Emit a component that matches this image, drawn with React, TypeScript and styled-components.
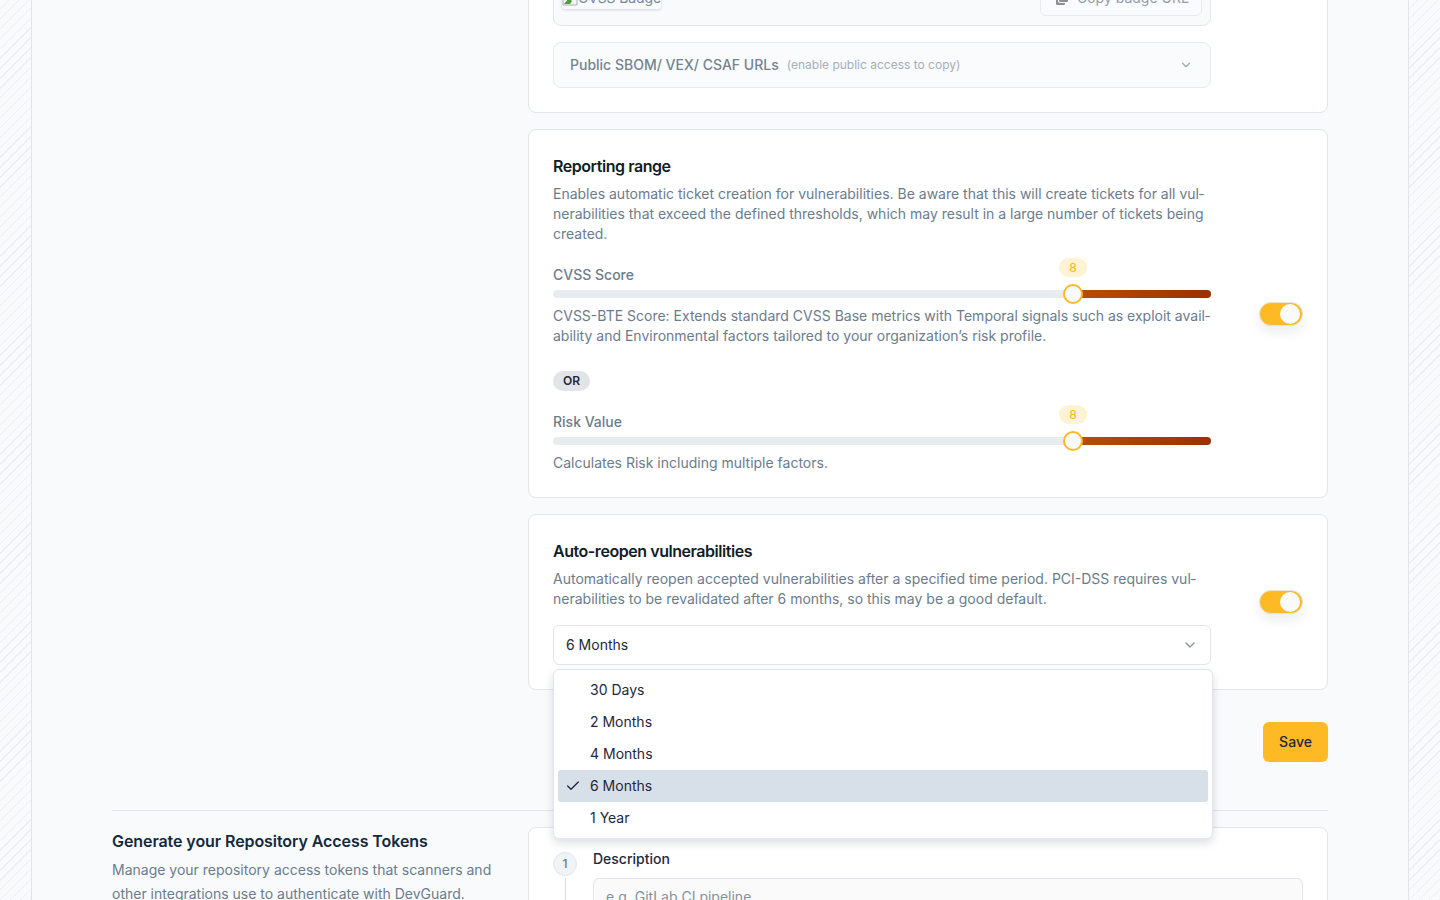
import { Check, ChevronDown } from 'lucide-react';
import { HiDocumentDuplicate } from 'react-icons/hi2';
import styled, { createGlobalStyle } from 'styled-components';

const GlobalStyle = createGlobalStyle`
  html, body {
    margin: 0;
    height: 100%;
    overflow: hidden;
    background: #f8fafc;
    font-family: Inter, "Liberation Sans", sans-serif;
    font-size: 14px;
    line-height: 20px;
    color: #0f172a;
  }
  * { box-sizing: border-box; }
`;

const Page = styled.div`
  display: flex;
  height: 900px;
  overflow: hidden;
`;

const Hatch = styled.div`
  flex: 0 0 31px;
  background-color: #f8fafc;
  background-image: repeating-linear-gradient(
    135deg,
    transparent 0 6px,
    #eceef2 6px 7px
  );
`;

const Main = styled.main`
  flex: 1;
  min-width: 0;
  border-left: 1px solid #e2e5ea;
  border-right: 1px solid #e2e5ea;
  padding: 0 80px;
  margin-top: -55px;
`;

const Row = styled.section`
  display: grid;
  grid-template-columns: 392px 800px;
  column-gap: 24px;
  align-items: start;
`;

const Stack = styled.div`
  grid-column: 2;
  display: flex;
  flex-direction: column;
  gap: 16px;
`;

const Card = styled.div`
  display: flex;
  gap: 48px;
  align-items: center;
  background: #fff;
  border: 1px solid #e2e5ea;
  border-radius: 8px;
  padding: 24px;
`;

const CardBody = styled.div`
  flex: 0 0 658px;
  width: 658px;
`;

const BadgeBox = styled.div`
  display: flex;
  align-items: center;
  justify-content: space-between;
  height: 56px;
  padding: 0 8px;
  background: #f8fafc;
  border: 1px solid #e2e5ea;
  border-radius: 8px;
  margin-bottom: 16px;
`;

const BadgeImage = styled.span`
  display: flex;
  align-items: center;
  height: 22px;
  color: #7d8996;
  font-size: 14px;
  letter-spacing: -0.1px;
  border-radius: 3px;
  box-shadow: 0 1px 3px rgba(15, 23, 42, 0.16);
`;

const CopyButton = styled.span`
  display: flex;
  align-items: center;
  gap: 7px;
  width: 162px;
  height: 36px;
  padding: 0 13px;
  color: #949ea9;
  font-size: 14px;
  white-space: nowrap;
  background: #fafbfc;
  border: 1px solid #e8eaee;
  border-radius: 6px;

  svg {
    color: #8b9097;
    flex: 0 0 16px;
  }
`;

const Accordion = styled.div`
  display: flex;
  align-items: center;
  height: 46px;
  padding: 0 17px 0 16px;
  background: #fafbfc;
  border: 1px solid #e8eaee;
  border-radius: 8px;
  color: #9aa3ae;
`;

const AccordionTitle = styled.span`
  font-weight: 500;
  color: #75838f;
`;

const AccordionHint = styled.span`
  margin-left: 8px;
  flex: 1;
  font-size: 12px;
  color: #a6aeb8;
`;

const Title = styled.h3`
  margin: 0 0 6px;
  font-size: 16px;
  line-height: 24px;
  font-weight: 600;
  letter-spacing: -0.45px;
  color: #111c27;
`;

const Muted = styled.p`
  margin: 0;
  color: #6b7c8c;
`;

const SliderLabel = styled.div<{ $top: number }>`
  margin-top: ${({ $top }) => $top}px;
  font-weight: 500;
  color: #6b7c8c;
`;

const SliderTrack = styled.div`
  position: relative;
  height: 8px;
  margin: 5px 0 8px;
  border-radius: 4px;
  background: #e8ebef;
`;

const SliderRange = styled.div`
  position: absolute;
  top: 0;
  bottom: 0;
  left: 520px;
  right: 0;
  border-radius: 0 4px 4px 0;
  background: linear-gradient(90deg, #b84f05, #9a3100);
`;

const SliderThumb = styled.div`
  position: absolute;
  top: -6px;
  left: 510px;
  width: 20px;
  height: 20px;
  border-radius: 50%;
  background: #f8fafc;
  border: 2px solid #fdba24;
`;

const SliderValue = styled.div`
  position: absolute;
  top: -32px;
  left: 506px;
  width: 28px;
  height: 19px;
  border-radius: 10px;
  background: #fff3d4;
  color: #fdba24;
  font-size: 12px;
  line-height: 19px;
  font-weight: 500;
  text-align: center;
`;

const OrPill = styled.span`
  display: inline-block;
  margin-top: 25px;
  padding: 0 10px;
  height: 20px;
  border-radius: 10px;
  background: #e2e4e7;
  color: #1e293b;
  font-size: 12px;
  line-height: 20px;
  font-weight: 600;
  vertical-align: top;
`;

const Toggle = styled.div`
  flex: 0 0 44px;
  display: flex;
  justify-content: flex-end;
  align-items: center;
  height: 24px;
  padding: 2px;
  border-radius: 12px;
  background: #fdba24;
  border: 1px solid #e9e3d2;
  box-shadow: 0 6px 12px rgba(15, 23, 42, 0.08);
`;

const ToggleKnob = styled.div`
  width: 20px;
  height: 20px;
  border-radius: 50%;
  background: #f8fafc;
`;

const SelectWrap = styled.div`
  position: relative;
  margin-top: 16px;
`;

const SelectButton = styled.div`
  display: flex;
  align-items: center;
  justify-content: space-between;
  height: 40px;
  padding: 0 12px;
  border: 1px solid #e2e5ea;
  border-radius: 6px;
  background: #fff;
  color: #1e293b;
`;

const Menu = styled.div`
  position: absolute;
  top: 44px;
  left: 0;
  width: 660px;
  padding: 4px;
  background: #fff;
  border: 1px solid #e2e5ea;
  border-radius: 6px;
  box-shadow: 0 4px 10px rgba(15, 23, 42, 0.14);
  z-index: 5;
`;

const MenuItem = styled.div<{ $selected?: boolean }>`
  position: relative;
  height: 32px;
  padding-left: 32px;
  line-height: 32px;
  border-radius: 3px;
  color: #1e293b;
  background: ${({ $selected }) => ($selected ? '#d7dfe9' : 'transparent')};
`;

const MenuCheck = styled.span`
  position: absolute;
  left: 7px;
  top: 8px;
  display: flex;
`;

const Actions = styled.div`
  display: flex;
  justify-content: flex-end;
  margin-top: 16px;
`;

const SaveButton = styled.button`
  width: 65px;
  height: 40px;
  border: 0;
  border-radius: 6px;
  background: #fdba24;
  color: #1e293b;
  font: 500 14px/20px Inter, "Liberation Sans", sans-serif;
`;

const TokenRow = styled(Row)`
  margin-top: 48px;
  padding-top: 16px;
  border-top: 1px solid #e2e5ea;
`;

const TokenIntro = styled.div`
  padding-top: 1px;
`;

const TokenTitle = styled.h2`
  margin: 0 0 4px;
  font-size: 16px;
  line-height: 26px;
  font-weight: 600;
  letter-spacing: -0.08px;
  color: #14293d;
`;

const TokenText = styled.p`
  margin: 0;
  line-height: 24px;
  color: #6b7c8c;
`;

const TokenCard = styled.div`
  grid-column: 2;
  display: flex;
  gap: 16px;
  height: 200px;
  padding: 24px;
  background: #fff;
  border: 1px solid #e2e5ea;
  border-radius: 8px;
`;

const StepRail = styled.div`
  display: flex;
  flex-direction: column;
  align-items: center;
  width: 24px;
`;

const StepCircle = styled.div`
  width: 24px;
  height: 24px;
  border-radius: 50%;
  border: 1px solid #e2e5ea;
  background: #f1f3f6;
  color: #6b7785;
  font-size: 12px;
  line-height: 22px;
  font-weight: 500;
  text-align: center;
`;

const StepLine = styled.div`
  flex: 1;
  width: 1px;
  margin-top: 2px;
  background: #d9dde3;
`;

const StepBody = styled.div`
  flex: 1;
`;

const FieldLabel = styled.label`
  display: block;
  margin-top: -3px;
  font-weight: 500;
  color: #1e293b;
`;

const TextInput = styled.div`
  height: 40px;
  margin-top: 9px;
  padding: 8px 12px;
  background: #fafafa;
  border: 1px solid #e2e5ea;
  border-radius: 6px;
  color: #85909c;
`;

const BrokenImageIcon = () => (
  <svg width="16" height="16" viewBox="0 0 16 16" aria-hidden="true">
    <path d="M1 1h10l4 4v10H1z" fill="#f4f6f8" stroke="#a9b0b8" />
    <path d="M2 14l5-6 3 3-2 3z" fill="#4f9e3f" />
    <path d="M11 1v4h4" fill="#dfe3e8" stroke="#a9b0b8" />
  </svg>
);

const SliderField = ({ label, top }: { label: string; top: number }) => (
  <>
    <SliderLabel $top={top}>{label}</SliderLabel>
    <SliderTrack>
      <SliderRange />
      <SliderValue>8</SliderValue>
      <SliderThumb />
    </SliderTrack>
  </>
);

const periods = ['30 Days', '2 Months', '4 Months', '6 Months', '1 Year'];

export default function App() {
  return (
    <Page>
      <GlobalStyle />
      <Hatch />
      <Main>
        <Row>
          <Stack>
            <Card>
              <CardBody>
                <BadgeBox>
                  <BadgeImage>
                    <BrokenImageIcon />
                    CVSS Badge
                  </BadgeImage>
                  <CopyButton>
                    <HiDocumentDuplicate size={16} />
                    Copy badge URL
                  </CopyButton>
                </BadgeBox>
                <Accordion>
                  <AccordionTitle>Public SBOM/ VEX/ CSAF URLs</AccordionTitle>
                  <AccordionHint>(enable public access to copy)</AccordionHint>
                  <ChevronDown size={14} />
                </Accordion>
              </CardBody>
            </Card>

            <Card>
              <CardBody>
                <Title>Reporting range</Title>
                <Muted>
                  Enables automatic ticket creation for vulnerabilities. Be aware that this will create tickets for all vul{'\u00AD'}nerabilities that exceed the defined thresholds, which may result in a large number of tickets being created.
                </Muted>
                <SliderField label="CVSS Score" top={21} />
                <Muted>
                  CVSS-BTE Score: Extends standard CVSS Base metrics with Temporal signals such as exploit avail{'\u00AD'}ability and Environmental factors tailored to your organization’s risk profile.
                </Muted>
                <OrPill>OR</OrPill>
                <SliderField label="Risk Value" top={21} />
                <Muted>Calculates Risk including multiple factors.</Muted>
              </CardBody>
              <Toggle>
                <ToggleKnob />
              </Toggle>
            </Card>

            <Card>
              <CardBody>
                <Title>Auto-reopen vulnerabilities</Title>
                <Muted>
                  Automatically reopen accepted vulnerabilities after a specified time period. PCI-DSS requires vul{'\u00AD'}nerabilities to be revalidated after 6 months, so this may be a good default.
                </Muted>
                <SelectWrap>
                  <SelectButton>
                    6 Months
                    <ChevronDown size={16} color="#8a94a3" />
                  </SelectButton>
                  <Menu>
                    {periods.map((period) => (
                      <MenuItem key={period} $selected={period === '6 Months'}>
                        {period === '6 Months' && (
                          <MenuCheck>
                            <Check size={16} />
                          </MenuCheck>
                        )}
                        {period}
                      </MenuItem>
                    ))}
                  </Menu>
                </SelectWrap>
              </CardBody>
              <Toggle>
                <ToggleKnob />
              </Toggle>
            </Card>

            <Actions>
              <SaveButton>Save</SaveButton>
            </Actions>
          </Stack>
        </Row>

        <TokenRow>
          <TokenIntro>
            <TokenTitle>Generate your Repository Access Tokens</TokenTitle>
            <TokenText>
              Manage your repository access tokens that scanners and other integrations use to authenticate with DevGuard.
            </TokenText>
          </TokenIntro>
          <TokenCard>
            <StepRail>
              <StepCircle>1</StepCircle>
              <StepLine />
            </StepRail>
            <StepBody>
              <FieldLabel>Description</FieldLabel>
              <TextInput>e.g. GitLab CI pipeline</TextInput>
            </StepBody>
          </TokenCard>
        </TokenRow>
      </Main>
      <Hatch />
    </Page>
  );
}
